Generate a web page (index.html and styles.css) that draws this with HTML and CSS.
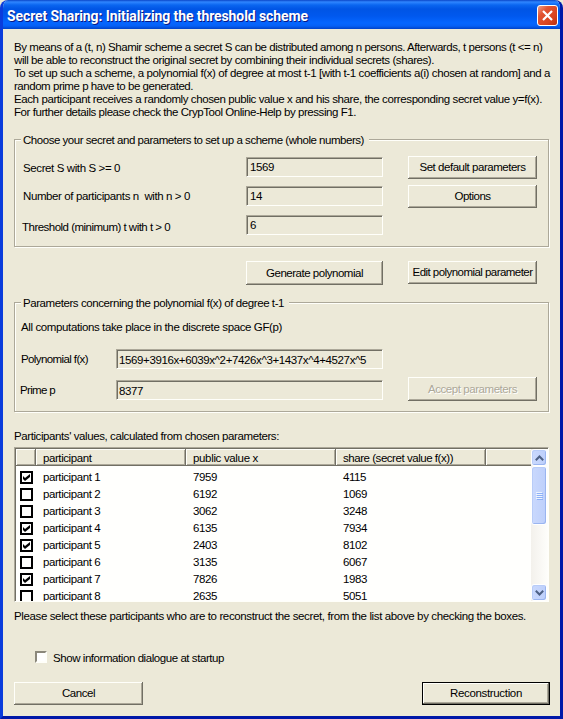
FILE: index.html
```html
<!DOCTYPE html>
<html lang="en">
<head>
<meta charset="utf-8">
<title>Secret Sharing</title>
<link rel="stylesheet" href="styles.css">
</head>
<body>
<div class="window">
  <header class="titlebar">
    <h1>Secret Sharing: Initializing the threshold scheme</h1>
    <button class="close" aria-label="Close"><svg width="11" height="11" viewBox="0 0 11 11"><path d="M1 1L10 10M10 1L1 10" stroke="#fff" stroke-width="2.2"/></svg></button>
  </header>
  <main class="content">
    <div class="intro">
      <p class="i1">By means of a (t, n) Shamir scheme a secret S can be distributed among n persons. Afterwards, t persons (t &lt;= n)</p>
      <p class="i2">will be able to reconstruct the original secret by combining their individual secrets (shares).</p>
      <p class="i3">To set up such a scheme, a polynomial f(x) of degree at most t-1 [with t-1 coefficients a(i) chosen at random] and a</p>
      <p class="i4">random prime p have to be generated.</p>
      <p class="i5">Each participant receives a randomly chosen public value x and his share, the corresponding secret value y=f(x).</p>
      <p class="i6">For further details please check the CrypTool Online-Help by pressing F1.</p>
    </div>

    <section class="group setup">
      <h2 class="legend t-setup">Choose your secret and parameters to set up a scheme (whole numbers)</h2>
      <div class="setup-grid">
        <div class="fields">
          <div class="row"><span class="t-secret">Secret S with S &gt;= 0</span><div class="input">1569</div></div>
          <div class="row"><span class="t-number">Number of participants n&nbsp; with n &gt; 0</span><div class="input">14</div></div>
          <div class="row"><span class="t-threshold">Threshold (minimum) t with t &gt; 0</span><div class="input">6</div></div>
        </div>
        <div class="side">
          <button class="btn t-default">Set default parameters</button>
          <button class="btn t-options">Options</button>
        </div>
      </div>
    </section>

    <div class="actions">
      <button class="btn generate">Generate polynomial</button>
      <button class="btn edit">Edit polynomial parameter</button>
    </div>

    <section class="group poly">
      <h2 class="legend t-poly">Parameters concerning the polynomial f(x) of degree t-1</h2>
      <p class="note">All computations take place in the discrete space GF(p)</p>
      <div class="poly-row"><span class="t-f">Polynomial f(x)</span><div class="input">1569+3916x+6039x^2+7426x^3+1437x^4+4527x^5</div></div>
      <div class="poly-row second"><span class="t-p">Prime p</span><div class="input">8377</div><button class="btn accept" disabled>Accept parameters</button></div>
    </section>

    <p class="list-label">Participants' values, calculated from chosen parameters:</p>
    <div class="list">
      <div class="table">
        <div class="thead"><span></span><span>participant</span><span class="h-public">public value x</span><span class="h-share">share (secret value f(x))</span><span></span></div>
        <div class="tbody">
          <div class="tr"><i class="cb"><svg viewBox="0 0 7 7"><path d="M0 2v3l2 2l5-4V0L2 4z"/></svg></i><span>participant 1</span><span>7959</span><span>4115</span></div>
          <div class="tr"><i class="cb"></i><span>participant 2</span><span>6192</span><span>1069</span></div>
          <div class="tr"><i class="cb"></i><span>participant 3</span><span>3062</span><span>3248</span></div>
          <div class="tr"><i class="cb"><svg viewBox="0 0 7 7"><path d="M0 2v3l2 2l5-4V0L2 4z"/></svg></i><span>participant 4</span><span>6135</span><span>7934</span></div>
          <div class="tr"><i class="cb"><svg viewBox="0 0 7 7"><path d="M0 2v3l2 2l5-4V0L2 4z"/></svg></i><span>participant 5</span><span>2403</span><span>8102</span></div>
          <div class="tr"><i class="cb"></i><span>participant 6</span><span>3135</span><span>6067</span></div>
          <div class="tr"><i class="cb"><svg viewBox="0 0 7 7"><path d="M0 2v3l2 2l5-4V0L2 4z"/></svg></i><span>participant 7</span><span>7826</span><span>1983</span></div>
          <div class="tr"><i class="cb"></i><span>participant 8</span><span>2635</span><span>5051</span></div>
        </div>
      </div>
      <div class="scrollbar">
        <div class="arrow"><svg width="9" height="6" viewBox="0 0 9 6"><path d="M.8 5.2L4.5 1.5L8.2 5.2" fill="none" stroke="#4d6185" stroke-width="2"/></svg></div>
        <div class="thumb"><svg width="7" height="8" viewBox="0 0 7 8"><path d="M0 .5h6M0 2.5h6M0 4.5h6M0 6.5h6" stroke="#eef4fe"/><path d="M1 1.5h6M1 3.5h6M1 5.5h6M1 7.5h6" stroke="#8cb0f8"/></svg></div>
        <div class="arrow down"><svg width="9" height="6" viewBox="0 0 9 6"><path d="M.8 .8L4.5 4.5L8.2 .8" fill="none" stroke="#4d6185" stroke-width="2"/></svg></div>
      </div>
    </div>
    <p class="hint">Please select these participants who are to reconstruct the secret, from the list above by checking the boxes.</p>

    <div class="startup"><i class="check"></i><span>Show information dialogue at startup</span></div>
    <footer class="footer">
      <button class="btn cancel">Cancel</button>
      <button class="btn reconstruct">Reconstruction</button>
    </footer>
  </main>
</div>
</body>
</html>
```
FILE: styles.css
```css
* { box-sizing: border-box; }
body {
  margin: 0;
  background: #ece9d8;
  color: #000;
  font: 11.5px/13px "Liberation Sans", Arial, sans-serif;
  letter-spacing: -0.42px;
  white-space: nowrap;
}
h1, h2, p { margin: 0; font-weight: normal; font-size: inherit; }
button { font: inherit; color: inherit; letter-spacing: inherit; padding: 0; }

.window {
  width: 563px;
  height: 719px;
  border: solid;
  border-width: 0 3px 3px;
  border-color: #0a3cdc #0018a8 #0018a8 #0a3cdc;
  border-radius: 8px 8px 0 0;
  overflow: hidden;
  background: #ece9d8;
}
.titlebar {
  height: 29px;
  margin: 0 -3px;
  padding: 4px 5px 0 7px;
  display: flex;
  justify-content: space-between;
  background: linear-gradient(#0a46c8 0, #2f86ff 2px, #0a66f0 5px, #0055e5 9px, #0058ee 16px, #0566ff 23px, #0560f5 26px, #0042c8 29px);
}
.titlebar h1 {
  color: #fff;
  font: bold 14px/25px Roboto, sans-serif;
  letter-spacing: -0.1px;
  text-shadow: 1px 1px #0a1883;
}
.close {
  width: 21px;
  height: 21px;
  margin-top: 1px;
  display: grid;
  place-items: center;
  border: 1px solid #fff;
  border-radius: 3px;
  background: linear-gradient(135deg, #f0a088, #e25432 30%, #d8441e 70%, #b83010);
}
.content { height: 687px; padding: 12px 11px 0; }
.i1 { letter-spacing: -0.453px; }
.i2 { letter-spacing: -0.423px; }
.i3 { letter-spacing: -0.392px; }
.i4 { letter-spacing: -0.462px; }
.i5 { letter-spacing: -0.403px; }
.i6 { letter-spacing: -0.437px; }

.group {
  width: 535px;
  border: 1px solid #aca899;
  box-shadow: 1px 1px #fffffa, inset 1px 1px #fffffa;
}
.legend {
  width: max-content;
  margin: -6px 0 0 6px;
  padding: 0 5px 0 2px;
  background: #ece9d8;
}
.t-setup { letter-spacing: -0.466px; }
.t-poly { letter-spacing: -0.426px; }
.setup { height: 108px; margin-top: 20px; }
.setup-grid { display: flex; justify-content: space-between; padding: 9px 11px 0 6px; }
.fields { padding: 1px 0 0 2px; display: grid; gap: 9px; }
.row { display: grid; grid-template-columns: 223px 137px; align-items: center; }
.t-secret { letter-spacing: -0.391px; padding-top: 2px; }
.t-number { letter-spacing: -0.395px; padding-top: 1px; }
.t-threshold { letter-spacing: -0.517px; margin-left: -1px; padding-top: 5px; }
.input {
  height: 20px;
  padding: 3px 0 0 2px;
  border: 1px solid;
  border-color: #aca899 #fffffa #fffffa #aca899;
  box-shadow: inset 1px 1px #716f64;
  line-height: 14px;
  letter-spacing: -0.38px;
}
.row .input { padding-left: 3px; line-height: 13px; }
.side { display: grid; gap: 6px; align-content: start; }
.btn {
  width: 129px;
  height: 23px;
  border: 0;
  background: #ece9d8;
  box-shadow: inset -1px -1px #716f64, inset 1px 1px #fffffa, inset -2px -2px #aca899;
  text-align: center;
}
.t-default { letter-spacing: -0.47px; padding-bottom: 1px; }
.t-options { letter-spacing: -0.519px; padding-bottom: 1px; }
.actions { display: flex; gap: 25px; margin: 14px 0 0 232px; }
.generate { width: 137px; height: 24px; letter-spacing: -0.48px; }
.edit { letter-spacing: -0.544px; }

.poly { height: 110px; margin-top: 17px; }
.note { margin: 11px 0 0 6px; letter-spacing: -0.38px; }
.poly-row { display: grid; grid-template-columns: 95px 267px 129px; align-items: center; margin: 15px 0 0 6px; height: 20px; }
.poly-row.second { margin-top: 11px; align-items: start; }
.second .t-p { padding-top: 4px; }
.t-f { letter-spacing: -0.604px; }
.t-p { letter-spacing: -0.66px; margin-left: -1px; }
.accept { margin: -3px 0 0 25px; height: 24px; letter-spacing: -0.442px; color: #aca899; text-shadow: 1px 1px #fff; }

.list-label { margin-top: 18px; letter-spacing: -0.41px; }
.list {
  width: 535px;
  height: 155px;
  margin-top: 4px;
  padding: 1px 0 0 1px;
  display: flex;
  border: 1px solid;
  border-color: #aca899 #fffffa #fffffa #aca899;
  box-shadow: inset 1px 1px #716f64;
  background: #fffffd;
  overflow: hidden;
}
.table { width: 515px; overflow: hidden; }
.thead, .tr { display: grid; grid-template-columns: 20px 150px 150px 150px 1fr; }
.thead { height: 17px; background: #ece9d8; }
.thead span {
  padding: 3px 0 0 7px;
  box-shadow: inset -1px -1px #716f64, inset 1px 1px #fffffa, inset -2px -2px #aca899;
}
.thead span:last-child { box-shadow: inset 0 -1px #716f64, inset 1px 1px #fffffa, inset 0 -2px #aca899; }
.h-public { letter-spacing: -0.335px; }
.h-share { letter-spacing: -0.457px; }
.tbody { padding-top: 3px; }
.tr { height: 17px; align-items: center; }
.tr span { padding-left: 7px; }
.cb {
  width: 13px;
  height: 13px;
  margin-left: 4px;
  border: 2px solid #000;
  display: grid;
  place-items: center;
}
.cb svg { width: 7px; height: 7px; display: block; }
.scrollbar { width: 17px; display: flex; flex-direction: column; background: linear-gradient(90deg, #f3f1ec, #fefefb); }
.arrow, .thumb {
  width: 16px;
  display: grid;
  place-items: center;
  border: 1px solid #fff;
  border-radius: 3px;
  background: linear-gradient(90deg, #cad9fd, #bdcffb);
  box-shadow: inset -1px -1px #9ab5f0, inset 1px 1px #b8ccf8;
}
.arrow { height: 17px; }
.thumb { height: 59px; }
.down { margin-top: auto; }
.hint { margin-top: 8px; letter-spacing: -0.373px; }
.startup { display: flex; gap: 6px; margin: 28px 0 0 21px; letter-spacing: -0.436px; line-height: 15px; }
.check {
  width: 12px;
  height: 12px;
  border: 2px solid;
  border-color: #8b887b #fffffa #fffffa #8b887b;
  background: #fff;
}
.footer { display: flex; justify-content: space-between; width: 536px; margin-top: 16px; }
.cancel { letter-spacing: -0.466px; }
.reconstruct {
  width: 128px;
  letter-spacing: -0.336px;
  border: 1px solid #000;
}
```
